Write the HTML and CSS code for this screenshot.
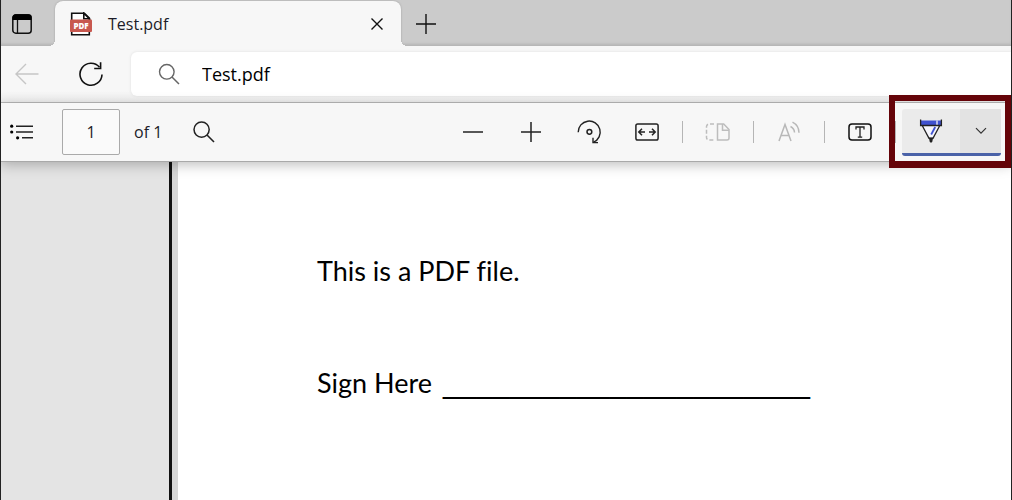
FILE: index.html
```html
<!DOCTYPE html>
<html lang="en">
<head>
    <meta charset="UTF-8">
    <meta name="viewport" content="width=device-width, initial-scale=1.0">
    <title>Test.pdf</title>
    <link rel="stylesheet" href="styles.css">
</head>
<body>
    <header class="tab-bar">
        <button class="tab-actions" aria-label="Tab actions menu">
            <svg width="22" height="22" viewBox="0 0 22 22"><rect x="1.8" y="1.8" width="18.4" height="18.4" rx="3" fill="none" stroke="#111" stroke-width="1.5"/><path d="M1.5 7V4.5a3 3 0 0 1 3-3h13a3 3 0 0 1 3 3V7z" fill="#000"/><path d="M6.5 7v13" stroke="#111" stroke-width="1.3"/></svg>
        </button>
        <div class="tab">
            <svg width="24" height="24" viewBox="0 0 24 24"><path d="M2.7 1.2h12.6l5 5v16.6H2.7z" fill="#fff" stroke="#111" stroke-width="1.6"/><path d="M14.8 1.2v5.5h5.5z" fill="#fff" stroke="#111" stroke-width="1.6"/><rect x="1" y="7.5" width="22" height="12.5" rx="1" fill="#c8584f"/><text class="pdf-label" x="12" y="17" text-anchor="middle">PDF</text></svg>
            <span class="tab-title">Test.pdf</span>
            <button class="tab-close" aria-label="Close tab">
                <svg width="14" height="14" viewBox="0 0 14 14"><path d="M1.5 1.5l11 11M12.5 1.5l-11 11" stroke="#111" stroke-width="1.4"/></svg>
            </button>
        </div>
        <button class="new-tab" aria-label="New tab">
            <svg width="22" height="22" viewBox="0 0 22 22"><path d="M11 1v20M1 11h20" stroke="#111" stroke-width="1.4"/></svg>
        </button>
    </header>

    <nav class="address-row">
        <button class="nav-btn" aria-label="Back" disabled>
            <svg width="26" height="24" viewBox="0 0 26 24"><path d="M24.5 12H2M12 2L2 12l10 10" fill="none" stroke="#c6c6c6" stroke-width="1.4"/></svg>
        </button>
        <button class="nav-btn" aria-label="Refresh">
            <svg width="26" height="26" viewBox="0 0 26 26"><path d="M24 13.5A11 11 0 1 1 21.5 6.2" fill="none" stroke="#111" stroke-width="1.6"/><path d="M22.6 1.2v6.3h-6.4" fill="none" stroke="#111" stroke-width="1.6"/></svg>
        </button>
        <label class="address">
            <svg width="22" height="22" viewBox="0 0 22 22"><circle cx="8.8" cy="8.8" r="7.3" fill="none" stroke="#666" stroke-width="1.4"/><path d="M14 14l7 7" stroke="#666" stroke-width="1.5"/></svg>
            <input type="text" value="Test.pdf" aria-label="Address">
        </label>
    </nav>

    <div class="toolbar">
        <button class="contents" aria-label="Table of contents">
            <svg width="24" height="18" viewBox="0 0 24 18"><path d="M6 3.2h17M6 9h17M12 14.8h11" stroke="#222" stroke-width="1.6"/><circle cx="1.7" cy="3.2" r="1.6"/><circle cx="1.7" cy="9" r="1.6"/><circle cx="7.6" cy="14.8" r="1.6"/></svg>
        </button>
        <input class="page-number" id="page" type="text" value="1">
        <label class="page-count" for="page">of 1</label>
        <button class="find" aria-label="Find">
            <svg width="22" height="22" viewBox="0 0 22 22"><circle cx="8.6" cy="8.6" r="7.6" fill="none" stroke="#222" stroke-width="1.5"/><path d="M14 14l7 7" stroke="#222" stroke-width="1.6"/></svg>
        </button>

        <div class="tools">
            <button aria-label="Zoom out">
                <svg width="22" height="22" viewBox="0 0 22 22"><path d="M1 11h20" stroke="#222" stroke-width="1.5"/></svg>
            </button>
            <button aria-label="Zoom in">
                <svg width="22" height="22" viewBox="0 0 22 22"><path d="M11 1v20M1 11h20" stroke="#222" stroke-width="1.5"/></svg>
            </button>
            <button aria-label="Rotate">
                <svg width="26" height="26" viewBox="0 0 26 26"><path d="M2.2 13.2A11 11 0 1 1 17.5 23.2" fill="none" stroke="#222" stroke-width="1.4"/><path d="M17 18.8v4.8h5" fill="none" stroke="#222" stroke-width="1.4"/><circle cx="13.4" cy="12.8" r="2.4" fill="none" stroke="#222" stroke-width="1.5"/></svg>
            </button>
            <button aria-label="Fit to width">
                <svg width="24" height="18" viewBox="0 0 24 18"><rect x=".9" y=".9" width="22.2" height="16.2" rx="1.8" fill="none" stroke="#222" stroke-width="1.5"/><path d="M10 9H4.2M7 5.8L3.8 9 7 12.2M14 9h5.8M17 5.8L20.2 9 17 12.2" fill="none" stroke="#222" stroke-width="1.5"/></svg>
            </button>
            <span class="sep"></span>
            <button aria-label="Page view" disabled>
                <svg width="26" height="18" viewBox="0 0 26 18"><g fill="none" stroke="#bdbdbd" stroke-width="1.5"><path d="M9 1H4a2.5 2.5 0 0 0-2.5 2.5v11A2.5 2.5 0 0 0 4 17h5" stroke-dasharray="4 2"/><path d="M12.5 1h6.2L24 6.5V15a2 2 0 0 1-2 2h-9.5z"/><path d="M17.5 1v6.3H24"/></g></svg>
            </button>
            <span class="sep"></span>
            <button aria-label="Read aloud" disabled>
                <svg width="24" height="24" viewBox="0 0 24 24"><g fill="none" stroke="#b8b8b8" stroke-width="1.5"><path d="M2 21L8 4.5 14 21M4.2 15.5h7.6"/><path d="M13.5 6.5a7 7 0 0 1 4 6M15.5 2.2a12 12 0 0 1 6.5 10.5"/></g></svg>
            </button>
            <span class="sep"></span>
            <button aria-label="Add text">
                <svg width="24" height="18" viewBox="0 0 24 18"><rect x="1" y="1" width="22" height="16" rx="3" fill="none" stroke="#111" stroke-width="1.5"/><path d="M8 6.4V4h8v2.4M12 4v10.2M9.8 14.2h4.4" fill="none" stroke="#222" stroke-width="1.3"/></svg>
            </button>
            <span class="sep"></span>
            <div class="draw">
                <button class="draw-pen" aria-label="Draw">
                    <svg width="24" height="26" viewBox="0 0 24 26"><path d="M3.2 7.5L10 20.3h4L20.8 7.5z" fill="#f6f6fc"/><path d="M2 2.5h20v5H2z" fill="#3f51cf"/><path d="M18 2.5v5" stroke="#fff" stroke-width="1.2"/><path d="M1.6 1.5v6h20.8v-6M3.2 7.5L10 20.3h4L20.8 7.5" fill="none" stroke="#222" stroke-width="1.3"/><path d="M16.2 9l-4 7.5" stroke="#3f51cf" stroke-width="1.8"/><path d="M9.8 19.5h4.4l-1 4.5-1.2.8-1.2-.8z" fill="#222"/></svg>
                </button>
                <button class="draw-more" aria-label="Draw options">
                    <svg width="12" height="8" viewBox="0 0 12 8"><path d="M1 1.2l5 5 5-5" fill="none" stroke="#333" stroke-width="1.2"/></svg>
                </button>
            </div>
        </div>
    </div>

    <main class="viewer">
        <div class="gutter"></div>
        <article class="page">
            <p>This is a PDF file.</p>
            <p>Sign Here <span class="sign-line">______________________</span></p>
        </article>
    </main>
</body>
</html>
```

FILE: styles.css
```css
* {
    box-sizing: border-box;
}
body {
    margin: 0;
    min-height: 100vh;
    display: flex;
    flex-direction: column;
    border: solid #222;
    border-width: 0 1px;
    background: #f7f7f7;
    color: #1c1c28;
    font-family: "Open Sans", "Noto Sans", sans-serif;
    overflow: hidden;
}
button {
    display: flex;
    align-items: center;
    justify-content: center;
    padding: 0;
    border: 0;
    background: none;
}
input {
    font: inherit;
    color: inherit;
    outline: 0;
}

/* tabs */
.tab-bar {
    display: flex;
    height: 46px;
    padding-top: 1px;
    background: #cbcbcb;
    box-shadow: inset 0 -3px 3px -1px #b4b4b4;
}
.tab-actions {
    width: 54px;
    padding-right: 12px;
}
.tab {
    position: relative;
    display: flex;
    align-items: center;
    width: 346px;
    padding: 0 17px 0 14px;
    border-radius: 8px 8px 0 0;
    background: #f7f7f7;
    box-shadow: 0 0 2px #999;
    clip-path: inset(-1px -8px 0);
}
.tab::before,
.tab::after {
    content: "";
    position: absolute;
    bottom: 0;
    width: 6px;
    height: 6px;
}
.tab::before {
    left: -6px;
    background: radial-gradient(circle at 0 0, transparent 6px, #f7f7f7 6px);
}
.tab::after {
    right: -6px;
    background: radial-gradient(circle at 100% 0, transparent 6px, #f7f7f7 6px);
}
.tab-title {
    flex: 1;
    margin-left: 15px;
    font-size: 16px;
}
.pdf-label {
    font-size: 8px;
    font-weight: 800;
    fill: #fff;
}
.new-tab {
    width: 50px;
}

/* address */
.address-row {
    display: flex;
    align-items: center;
    height: 57px;
    border-bottom: 1px solid #b9b9b9;
    background: linear-gradient(#f7f7f7 80%, #eee);
}
.nav-btn {
    width: 76px;
}
.nav-btn:first-child {
    width: 52px;
}
.nav-btn + .address {
    margin-left: 2px;
}
.address {
    flex: 1;
    display: flex;
    align-items: center;
    gap: 22px;
    height: 44px;
    padding-left: 27px;
    border-radius: 6px 0 0 6px;
    background: #fff;
    box-shadow: 0 0 3px #ddd;
}
.address input {
    flex: 1;
    min-width: 0;
    padding: 0;
    border: 0;
    color: #000;
    font-size: 18px;
}

/* pdf toolbar */
.toolbar {
    position: relative;
    display: flex;
    align-items: center;
    height: 59px;
    padding: 0 10px 0 9px;
    border-bottom: 1px solid #a9a9a9;
    background: #f7f7f7;
    box-shadow: 0 3px 12px rgba(0, 0, 0, 0.25);
}
.page-number {
    width: 58px;
    height: 46px;
    margin: 0 14px 0 28px;
    padding: 0;
    border: 1px solid #aaa;
    border-radius: 2px;
    background: #fafafa;
    font-size: 16px;
    text-align: center;
}
.page-count {
    font-size: 16px;
}
.find {
    margin-left: 31px;
}
.tools {
    display: flex;
    align-items: center;
    margin-left: auto;
}
.tools button {
    width: 58px;
    height: 46px;
}
.sep {
    width: 1px;
    height: 22px;
    margin: 0 6px;
    background: #b5b5b5;
}
.draw {
    position: relative;
    display: flex;
    border-bottom: 3px solid #4a62a8;
    border-radius: 3px;
    background: #ebebeb;
}
/* marker frame round the draw button */
.draw::after {
    content: "";
    position: absolute;
    inset: -14px -10px -15px -13px;
    border: solid #650409;
    border-width: 6px 6px 7px;
    pointer-events: none;
}
.tools .draw-pen {
    width: 58px;
    height: 44px;
}
.tools .draw-more {
    width: 41px;
    height: 44px;
    background: #e3e3e3;
}

/* document */
.viewer {
    flex: 1;
    display: flex;
}
.gutter {
    width: 171px;
    border-right: 3px solid #111;
    background: #e4e4e4;
}
.page {
    flex: 1;
    padding: 91px 0 0 139px;
    border-left: 6px solid #d6d6d6;
    background: #fff;
    color: #000;
    font-family: Lato, sans-serif;
    font-size: 27px;
    line-height: 36px;
    font-variant-ligatures: none;
}
.page p {
    margin: 0 0 76px;
    white-space: nowrap;
}
.sign-line {
    margin-left: 4px;
    font-family: "Liberation Sans", sans-serif;
    font-size: 30px;
}
```
